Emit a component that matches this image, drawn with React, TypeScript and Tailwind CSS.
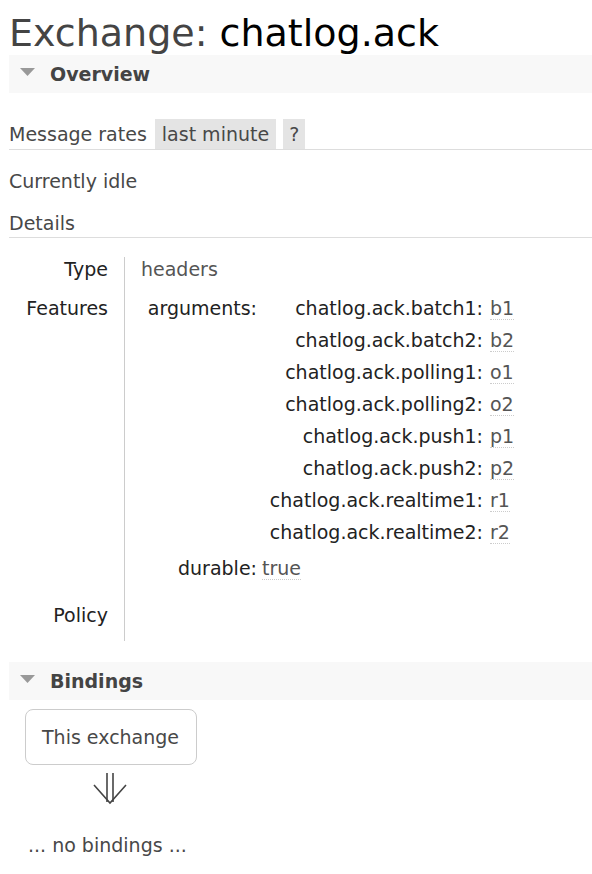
import React from 'react';

const args: [string, string][] = [
  ['chatlog.ack.batch1', 'b1'],
  ['chatlog.ack.batch2', 'b2'],
  ['chatlog.ack.polling1', 'o1'],
  ['chatlog.ack.polling2', 'o2'],
  ['chatlog.ack.push1', 'p1'],
  ['chatlog.ack.push2', 'p2'],
  ['chatlog.ack.realtime1', 'r1'],
  ['chatlog.ack.realtime2', 'r2'],
];

const SectionHeader: React.FC<{ title: string }> = ({ title }) => (
  <div className="h-[38px] bg-[#f8f8f8] flex items-center">
    <svg width="15" height="8" viewBox="0 0 15 8" className="ml-[11px] mr-[15px] -mt-[4px]">
      <polygon points="0,0 15,0 7.5,8" fill="#999" />
    </svg>
    <span className="font-bold text-[#444]">{title}</span>
  </div>
);

const Val: React.FC<{ children: React.ReactNode }> = ({ children }) => (
  <span className="text-[#555] border-b border-dotted border-[#ccc]">{children}</span>
);

export default function App() {
  return (
    <div
      className="min-h-[874px] bg-white pl-[9px] text-[19px] leading-[24px] text-[#484848]"
      style={{ fontFamily: '"DejaVu Sans", Verdana, sans-serif' }}
    >
      <h1 className="pt-[11px] text-[38px] leading-[44px] text-[#444]">
        Exchange: <span className="text-black">chatlog.ack</span>
      </h1>

      <SectionHeader title="Overview" />

      {/* Message rates */}
      <div className="mt-[26px] h-[31px] flex items-start border-b border-[#ddd]">
        <span className="leading-[30px]">Message rates</span>
        <span className="ml-[8px] h-[30px] leading-[30px] px-[7px] bg-[#e4e4e4]">last minute</span>
        <span className="ml-[7px] h-[30px] leading-[30px] px-[6px] bg-[#e4e4e4]">?</span>
      </div>

      <div className="mt-[19px]">Currently idle</div>

      <div className="mt-[18px] pb-[2px] border-b border-[#ddd]">Details</div>

      {/* Details table */}
      <div className="mt-[19px] grid grid-cols-[115px_1fr]">
        <div className="text-right pr-[16px] pb-[15px] text-[#222]">Type</div>
        <div className="border-l border-[#ccc] pl-[16px] pb-[15px] text-[#555]">headers</div>

        <div className="text-right pr-[16px] text-[#222]">Features</div>
        <div className="border-l border-[#ccc] pl-[16px] pb-[23px] text-[#222]">
          <div className="grid grid-cols-[116px_1fr] gap-y-[12px]">
            <div className="text-right">arguments:</div>
            <div className="pl-[7px] grid grid-cols-[219px_auto] gap-y-[8px] justify-start">
              {args.map(([k, v]) => (
                <React.Fragment key={k}>
                  <div className="text-right">{k}:</div>
                  <div className="pl-[7px]">
                    <Val>{v}</Val>
                  </div>
                </React.Fragment>
              ))}
            </div>
            <div className="text-right">durable:</div>
            <div className="pl-[5px]">
              <Val>true</Val>
            </div>
          </div>
        </div>

        <div className="text-right pr-[16px] pb-[14px] text-[#222]">Policy</div>
        <div className="border-l border-[#ccc] pb-[14px]"></div>
      </div>

      <div className="mt-[21px]">
        <SectionHeader title="Bindings" />
      </div>

      <div className="ml-[16px] mt-[9px] w-[172px] h-[56px] border border-[#ccc] rounded-[8px] flex items-center pl-[16px]">
        This exchange
      </div>

      <svg width="50" height="50" viewBox="0 0 50 50" className="ml-[76px] block">
        <g stroke="#444" strokeWidth="1.6" fill="none">
          <line x1="22" y1="8" x2="22" y2="37" />
          <line x1="28" y1="8" x2="28" y2="37" />
          <polyline points="9,20 25,38 41,20" />
        </g>
      </svg>

      <div className="mt-[18px] ml-[19px]">... no bindings ...</div>
    </div>
  );
}
